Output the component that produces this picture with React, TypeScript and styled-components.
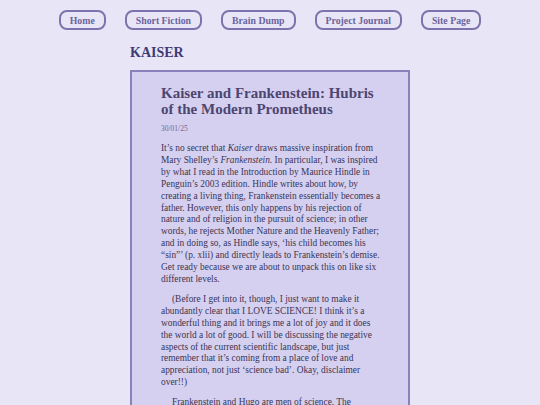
import React from 'react'
import styled, { createGlobalStyle } from 'styled-components'

const GlobalStyle = createGlobalStyle`
	html, body {
		margin: 0;
		padding: 0;
		background: #e8e6f6;
		font-family: 'Liberation Serif', Georgia, serif;
	}
`

const Page = styled.div`
	display: flex;
	flex-direction: column;
	align-items: center;
	padding-top: 10px;
`

const Nav = styled.nav`
	display: flex;
	justify-content: center;
	gap: 19px;
`

const NavButton = styled.a`
	display: flex;
	align-items: center;
	justify-content: center;
	height: 16px;
	padding: 0 9px;
	border: 2px solid #7d74ae;
	border-radius: 8px;
	color: #6b649e;
	font-size: 9.8px;
	font-weight: bold;
	text-decoration: none;
`

const Main = styled.main`
	width: 280px;
	margin-top: 14px;
`

const SiteHeading = styled.h1`
	margin: 0 0 9px;
	font-size: 14px;
	line-height: 17px;
	font-weight: bold;
	color: #3f3a73;
`

const Card = styled.article`
	box-sizing: border-box;
	background: #d5d0ef;
	border: 2px solid #8a81ba;
	padding: 14px 25px 0 29px;
	min-height: 400px;
`

const Title = styled.h2`
	margin: 0;
	padding-right: 4px;
	font-size: 15px;
	line-height: 15.5px;
	font-weight: bold;
	color: #4d4672;
`

const Date = styled.div`
	margin: 7px 0 9px;
	font-size: 7.5px;
	line-height: 10px;
	color: #6f6796;
`

const Paragraph = styled.p<{ $indent?: boolean }>`
	margin: 0 0 8px;
	font-size: 9.4px;
	line-height: 11.9px;
	color: #3b3556;
	text-indent: ${(props) => (props.$indent ? '11px' : '0')};
`

const links = ['Home', 'Short Fiction', 'Brain Dump', 'Project Journal', 'Site Page']

export default function App() {
	return (
		<>
			<GlobalStyle />
			<Page>
				<Nav>
					{links.map((link) => (
						<NavButton key={link} href="#">
							{link}
						</NavButton>
					))}
				</Nav>
				<Main>
					<SiteHeading>KAISER</SiteHeading>
					<Card>
						<Title>Kaiser and Frankenstein: Hubris of the Modern Prometheus</Title>
						<Date>30/01/25</Date>
						<Paragraph>
							It’s no secret that <em>Kaiser</em> draws massive inspiration from Mary
							Shelley’s <em>Frankenstein</em>. In particular, I was inspired by what I
							read in the Introduction by Maurice Hindle in Penguin’s 2003 edition.
							Hindle writes about how, by creating a living thing, Frankenstein
							essentially becomes a father. However, this only happens by his rejection
							of nature and of religion in the pursuit of science; in other words, he
							rejects Mother Nature and the Heavenly Father; and in doing so, as Hindle
							says, ‘his child becomes his “sin”’ (p. xlii) and directly leads to
							Frankenstein’s demise. Get ready because we are about to unpack this on
							like six different levels.
						</Paragraph>
						<Paragraph $indent>
							(Before I get into it, though, I just want to make it abundantly clear
							that I LOVE SCIENCE! I think it’s a wonderful thing and it brings me a lot
							of joy and it does the world a lot of good. I will be discussing the
							negative aspects of the current scientific landscape, but just remember
							that it’s coming from a place of love and appreciation, not just ‘science
							bad’. Okay, disclaimer over!!)
						</Paragraph>
						<Paragraph $indent>
							Frankenstein and Hugo are men of science. The
						</Paragraph>
					</Card>
				</Main>
			</Page>
		</>
	)
}
